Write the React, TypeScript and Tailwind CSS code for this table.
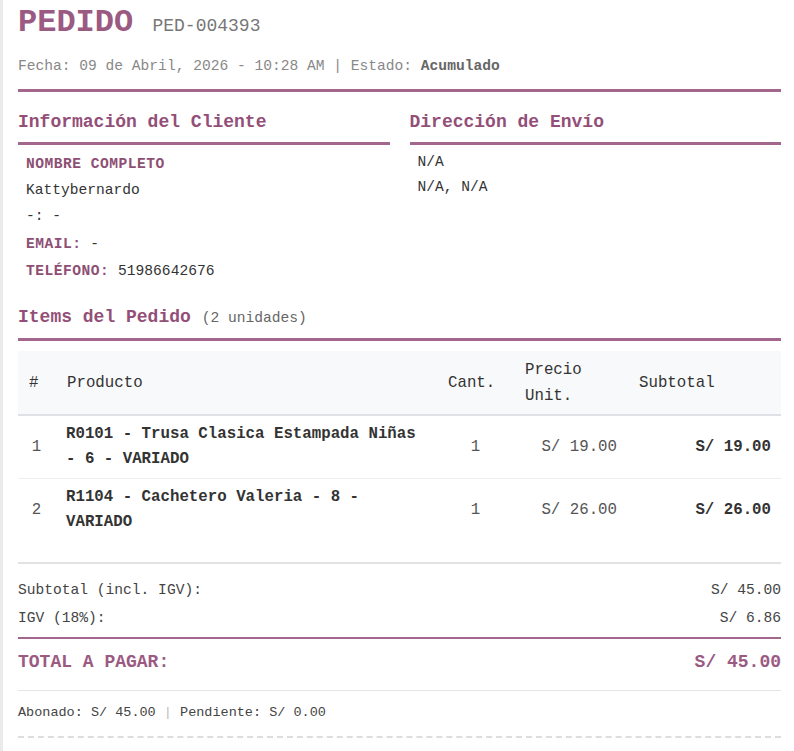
import React from 'react';

const mono = "font-[family-name:'Liberation_Mono','Courier_New',monospace]";

interface Item {
  n: number;
  name: string;
  qty: number;
  price: string;
  subtotal: string;
}

const items: Item[] = [
  { n: 1, name: 'R0101 - Trusa Clasica Estampada Niñas - 6 - VARIADO', qty: 1, price: 'S/ 19.00', subtotal: 'S/ 19.00' },
  { n: 2, name: 'R1104 - Cachetero Valeria - 8 - VARIADO', qty: 1, price: 'S/ 26.00', subtotal: 'S/ 26.00' },
];

const SectionTitle: React.FC<{ children: React.ReactNode }> = ({ children }) => (
  <h2 className="text-[18px] leading-[24px] font-bold text-[#934f78] pb-[8px] border-b-[3px] border-[#a3668c]">
    {children}
  </h2>
);

const App: React.FC = () => {
  return (
    <div className={`${mono} flex min-h-[751px] bg-white text-[#444]`}>
      <div className="w-[3px] shrink-0 bg-[#ebebeb]" />
      <div className="flex-1 pl-[15px] pr-[13px] pt-[3px]">
        {/* encabezado */}
        <div className="border-b-[3px] border-[#a3668c] pb-[13px]">
          <h1 className="text-[32px] leading-[40px] font-bold text-[#9b5a82]">
            PEDIDO <span className="text-[18px] font-normal text-[#777]">PED-004393</span>
          </h1>
          <p className="mt-[10px] text-[14.6px] leading-[20px] text-[#888]">
            Fecha: 09 de Abril, 2026 - 10:28 AM | Estado: <span className="font-bold text-[#666]">Acumulado</span>
          </p>
        </div>

        {/* cliente / envío */}
        <div className="grid grid-cols-2 gap-5 mt-[18px]">
          <div>
            <SectionTitle>Información del Cliente</SectionTitle>
            <div className="pl-[8px] pt-[6px] text-[14.6px] text-[#333]">
              <div className="leading-[26px] font-bold uppercase tracking-[0.5px] text-[#8e4f74]">Nombre completo</div>
              <div className="leading-[26px]">Kattybernardo</div>
              <div className="leading-[26px]">-: -</div>
              <div className="leading-[26px] mt-[2px]">
                <span className="font-bold uppercase tracking-[0.5px] text-[#8e4f74]">Email:</span> -
              </div>
              <div className="leading-[26px] mt-[1px]">
                <span className="font-bold uppercase tracking-[0.5px] text-[#8e4f74]">Teléfono:</span> 51986642676
              </div>
            </div>
          </div>
          <div>
            <SectionTitle>Dirección de Envío</SectionTitle>
            <div className="pl-[8px] pt-[5px] text-[14.6px] leading-[25px] text-[#333]">
              <div>N/A</div>
              <div>N/A, N/A</div>
            </div>
          </div>
        </div>

        {/* items */}
        <div className="mt-[21px]">
          <SectionTitle>
            Items del Pedido <span className="text-[14.6px] font-normal text-[#666]">(2 unidades)</span>
          </SectionTitle>
        </div>

        <table className="mt-[10px] w-full table-fixed border-collapse text-[15.75px] text-[#333]">
          <colgroup>
            <col className="w-[37px]" />
            <col className="w-[382px]" />
            <col className="w-[77px]" />
            <col className="w-[114px]" />
            <col />
          </colgroup>
          <thead>
            <tr className="bg-[#f8f9fa] border-b-2 border-[#dee2e6]">
              <th className="h-[64px] px-[11px] text-left font-normal leading-[26px] align-middle">#</th>
              <th className="px-[12px] text-left font-normal leading-[26px] align-middle">Producto</th>
              <th className="px-[11px] text-left font-normal leading-[26px] align-middle">Cant.</th>
              <th className="px-[11px] text-left font-normal leading-[26px] align-middle">Precio Unit.</th>
              <th className="px-[11px] text-left font-normal leading-[26px] align-middle">Subtotal</th>
            </tr>
          </thead>
          <tbody>
            {items.map((it, i) => (
              <tr key={it.n} className={i < items.length - 1 ? 'border-b border-[#eeeeee]' : ''}>
                <td className="py-[6px] text-center align-middle leading-[25px] text-[#555]">{it.n}</td>
                <td className="py-[6px] px-[11px] align-middle leading-[25px] font-bold">{it.name}</td>
                <td className="py-[6px] text-center align-middle leading-[25px] text-[#555]">{it.qty}</td>
                <td className="py-[6px] px-[11px] text-right align-middle leading-[25px] text-[#555]">{it.price}</td>
                <td className="py-[6px] pr-[10px] text-right align-middle leading-[25px] font-bold">{it.subtotal}</td>
              </tr>
            ))}
          </tbody>
        </table>

        {/* totales */}
        <div className="mt-[21px] border-t-2 border-[#e2e2e2] pt-[12px] text-[14.6px] text-[#444]">
          <div className="flex justify-between leading-[28px]">
            <span>Subtotal (incl. IGV):</span>
            <span>S/ 45.00</span>
          </div>
          <div className="flex justify-between leading-[28px]">
            <span>IGV (18%):</span>
            <span>S/ 6.86</span>
          </div>
          <div className="mt-[5px] border-t-2 border-[#a3668c] pt-[9px] pb-[14px] flex justify-between text-[18px] leading-[28px] font-bold text-[#9b5a82]">
            <span>TOTAL A PAGAR:</span>
            <span>S/ 45.00</span>
          </div>
        </div>

        <div className="border-t border-[#e5e5e5]">
          <div className="pt-[12px] pb-[13px] text-[13.5px] leading-[20px] text-[#444] border-b-2 border-dashed border-[#dddddd]">
            Abonado: S/ 45.00 <span className="text-[#bbb]">|</span> Pendiente: S/ 0.00
          </div>
        </div>
      </div>
    </div>
  );
};

export default App;
